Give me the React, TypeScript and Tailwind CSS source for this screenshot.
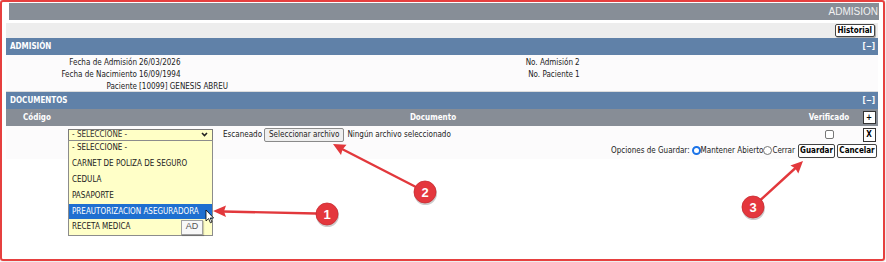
import React from "react";

const info = [
  { l1: "Fecha de Admisión", v1: "26/03/2026", l2: "No. Admisión", v2: "2" },
  { l1: "Fecha de Nacimiento", v1: "16/09/1994", l2: "No. Paciente", v2: "1" },
  { l1: "Paciente", v1: "[10099] GENESIS ABREU", l2: "", v2: "" },
];

const options = [
  "- SELECCIONE -",
  "CARNET DE POLIZA DE SEGURO",
  "CEDULA",
  "PASAPORTE",
  "PREAUTORIZACION ASEGURADORA",
  "RECETA MEDICA",
];

const BlueBar = ({ title }: { title: string }) => (
  <div className="h-[17px] bg-[#6081a8] flex items-center justify-between pl-[4px] pr-[3px] text-white font-bold">
    <span>{title}</span>
    <span>[−]</span>
  </div>
);

const Marker = ({ cx, cy, n }: { cx: number; cy: number; n: string }) => (
  <g>
    <circle cx={cx + 0.5} cy={cy + 1.5} r={11.5} fill="#00000033" />
    <circle cx={cx} cy={cy} r={11} fill="#e4373d" stroke="#c92a30" strokeWidth={0.8} />
    <text
      x={cx}
      y={cy + 4.5}
      textAnchor="middle"
      fill="#fff"
      fontSize="13"
      fontWeight="bold"
      fontFamily="Liberation Sans, Arial, sans-serif"
    >
      {n}
    </text>
  </g>
);

export default function App() {
  return (
    <div className="w-[886px] h-[262px] bg-white relative overflow-hidden font-['DejaVu_Sans_Condensed','DejaVu_Sans',sans-serif] text-[8px] text-[#222]">
      <div className="w-[885px] h-[261px] border-2 border-[#e6403f] rounded-[3px] pl-[4px] pr-[5px] pt-[1px] shadow-[0_0_2px_rgba(0,0,0,0.25)]">
        {/* title */}
        <div className="ml-[3px] mr-[-1px] h-[17px] bg-[#878e97] flex items-center justify-end pr-[1px] font-['Liberation_Sans',Arial,sans-serif] text-[10px] text-[#f2f2f2]">
          ADMISION
        </div>

        <div className="mt-[3px] h-[15px] bg-[#ededed] flex items-center justify-end pr-[3px]">
          <button className="h-[13px] px-[2px] bg-white border border-[#444] rounded-[2px] font-bold text-black leading-none shadow-[1px_1px_0_#aaa]">
            Historial
          </button>
        </div>

        <BlueBar title="ADMISIÓN" />

        <div className="h-[37px] bg-[#fcfbfc] pt-[2px] border-b border-[#dcdcdc]">
          {info.map((r) => (
            <div key={r.l1} className="grid grid-cols-[131px_305px_131px_1fr] h-[11.8px] items-center">
              <span className="text-right">{r.l1}</span>
              <span className="pl-[2px]">{r.v1}</span>
              <span className="text-right">{r.l2}</span>
              <span className="pl-[2px]">{r.v2}</span>
            </div>
          ))}
        </div>

        <BlueBar title="DOCUMENTOS" />

        <div className="h-[17px] bg-[#878d96] grid grid-cols-[62px_730px_62px_18px] items-center text-white font-bold">
          <span className="text-center">Código</span>
          <span className="text-center">Documento</span>
          <span className="text-center">Verificado</span>
          <span className="flex justify-center">
            <span className="w-[13px] h-[13px] bg-white border border-[#333] text-black flex items-center justify-center leading-none">
              +
            </span>
          </span>
        </div>

        <div className="bg-[#fcfbfc] pb-[1px]">
          <div className="h-[17px] grid grid-cols-[62px_730px_62px_18px] items-center">
            <span />
            <div className="flex items-center">
              <div className="relative">
                <div className="w-[145px] h-[12px] bg-[#ffffc6] border border-[#7b7b7b] flex items-center justify-between pl-[3px] pr-[4px] text-[#333]">
                  <span>- SELECCIONE -</span>
                  <svg width="7" height="5" viewBox="0 0 7 5">
                    <path d="M1 1 L3.5 3.5 L6 1" stroke="#222" strokeWidth="1.6" fill="none" />
                  </svg>
                </div>
                <div className="absolute left-0 top-[11px] w-[145px] bg-[#ffffc8] border border-[#8c8c8c] z-10">
                  {options.map((o, i) => (
                    <div
                      key={o}
                      className={`h-[15.8px] flex items-center pl-[3px] ${
                        i === 4 ? "bg-[#1f6fd0] text-white" : "text-[#222]"
                      }`}
                    >
                      {o}
                    </div>
                  ))}
                  <div className="absolute left-[112px] top-[79px] w-[22px] h-[15px] bg-[#f8f8f8] border border-[#a0a0a0] flex items-center justify-center text-[9px] text-[#555] font-['Liberation_Sans',Arial,sans-serif] shadow-[1px_1px_1px_rgba(0,0,0,0.2)]">
                    AD
                  </div>
                </div>
              </div>
              <span className="ml-[10px]">Escaneado</span>
              <button className="ml-[2px] h-[14px] px-[4px] bg-[#efefef] border border-[#8a8a8a] rounded-[2px] leading-none text-[#222]">
                Seleccionar archivo
              </button>
              <span className="ml-[3px]">Ningún archivo seleccionado</span>
            </div>
            <div className="flex justify-center">
              <span className="w-[9px] h-[9px] border border-[#777] rounded-[2px] bg-white" />
            </div>
            <div className="flex justify-center">
              <span className="w-[13px] h-[14px] bg-white border border-[#333] font-bold text-black flex items-center justify-center leading-none">
                X
              </span>
            </div>
          </div>

          <div className="h-[15px] flex items-center justify-end pr-[1px]">
            <span>Opciones de Guardar:</span>
            <span className="ml-[2px] w-[9px] h-[9px] rounded-full border-[2.5px] border-[#1b73e8] bg-white" />
            <span>Mantener Abierto</span>
            <span className="w-[9px] h-[9px] rounded-full border border-[#777] bg-white" />
            <span>Cerrar</span>
            <button className="ml-[3px] h-[14px] w-[37px] bg-white border border-[#444] rounded-[2px] font-bold text-black leading-none">
              Guardar
            </button>
            <button className="ml-[2px] h-[14px] w-[40px] bg-white border border-[#444] rounded-[2px] font-bold text-black leading-none">
              Cancelar
            </button>
          </div>
        </div>
      </div>

      {/* annotations */}
      <svg className="absolute inset-0 pointer-events-none z-20" width="886" height="262">
        <path d="M206 210 L206 221 L208.6 218.6 L210.4 222.8 L212 222 L210.2 218 L213.6 218 Z" fill="#fff" stroke="#000" strokeWidth="0.8" />
        <g stroke="#e2383c" strokeWidth="2.4" strokeLinecap="round">
          <line x1="316" y1="213.5" x2="223" y2="211.5" />
          <line x1="415" y1="186.5" x2="342" y2="149" />
          <line x1="761" y1="199.5" x2="796" y2="167.5" />
        </g>
        <g fill="#e2383c">
          <polygon points="213,211 226,205.5 224,211.3 226,217" />
          <polygon points="333,144 346.5,144.8 342.5,149.5 341,155" />
          <polygon points="803,161 798.3,173.6 795.2,168.2 790.4,165.6" />
        </g>
        <Marker cx={327} cy={214} n="1" />
        <Marker cx={425} cy={192} n="2" />
        <Marker cx={753} cy={207} n="3" />
      </svg>
    </div>
  );
}
